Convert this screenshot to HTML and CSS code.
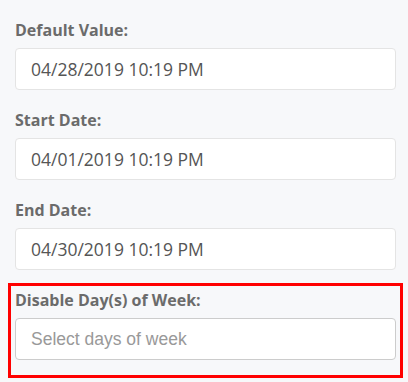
FILE: index.html
```html
<!DOCTYPE html>
<html lang="en">
<head>
    <meta charset="UTF-8">
    <meta name="viewport" content="width=device-width, initial-scale=1.0">
    <title>Date Picker Options</title>
    <link rel="stylesheet" href="styles.css">
</head>
<body>
    <div class="options">
        <div class="field">
            <label class="field-label">Default Value:</label>
            <div class="field-input">04/28/2019 10:19 PM</div>
        </div>
        <div class="field">
            <label class="field-label">Start Date:</label>
            <div class="field-input">04/01/2019 10:19 PM</div>
        </div>
        <div class="field">
            <label class="field-label">End Date:</label>
            <div class="field-input">04/30/2019 10:19 PM</div>
        </div>
        <div class="field highlighted">
            <label class="field-label">Disable Day(s) of Week:</label>
            <div class="field-input select">Select days of week</div>
        </div>
    </div>
</body>
</html>
```

FILE: styles.css
```css
body {
    margin: 0;
    background: #f7f8fa;
    font-family: "Open Sans", sans-serif;
}

.options {
    display: flex;
    flex-direction: column;
    gap: 20px;
    padding: 20px 12px 0 15px;
}

.field-label {
    display: block;
    font-size: 16px;
    line-height: 20px;
    font-weight: 700;
    color: #6b6b6b;
    margin-bottom: 8px;
}

.field-input {
    box-sizing: border-box;
    height: 42px;
    padding: 0 15px;
    display: flex;
    align-items: center;
    background: #fff;
    border: 1px solid #e4e4e4;
    border-radius: 4px;
    font-size: 17.5px;
    color: #555;
}

/* red highlight around the last option */
.highlighted {
    margin: -7px -7px 0;
    padding: 4px 4px 15px;
    border: 3px solid #f00;
}

.select {
    border-color: #ccc;
    font-family: "Liberation Sans", Arial, sans-serif;
    color: #999;
}
```
